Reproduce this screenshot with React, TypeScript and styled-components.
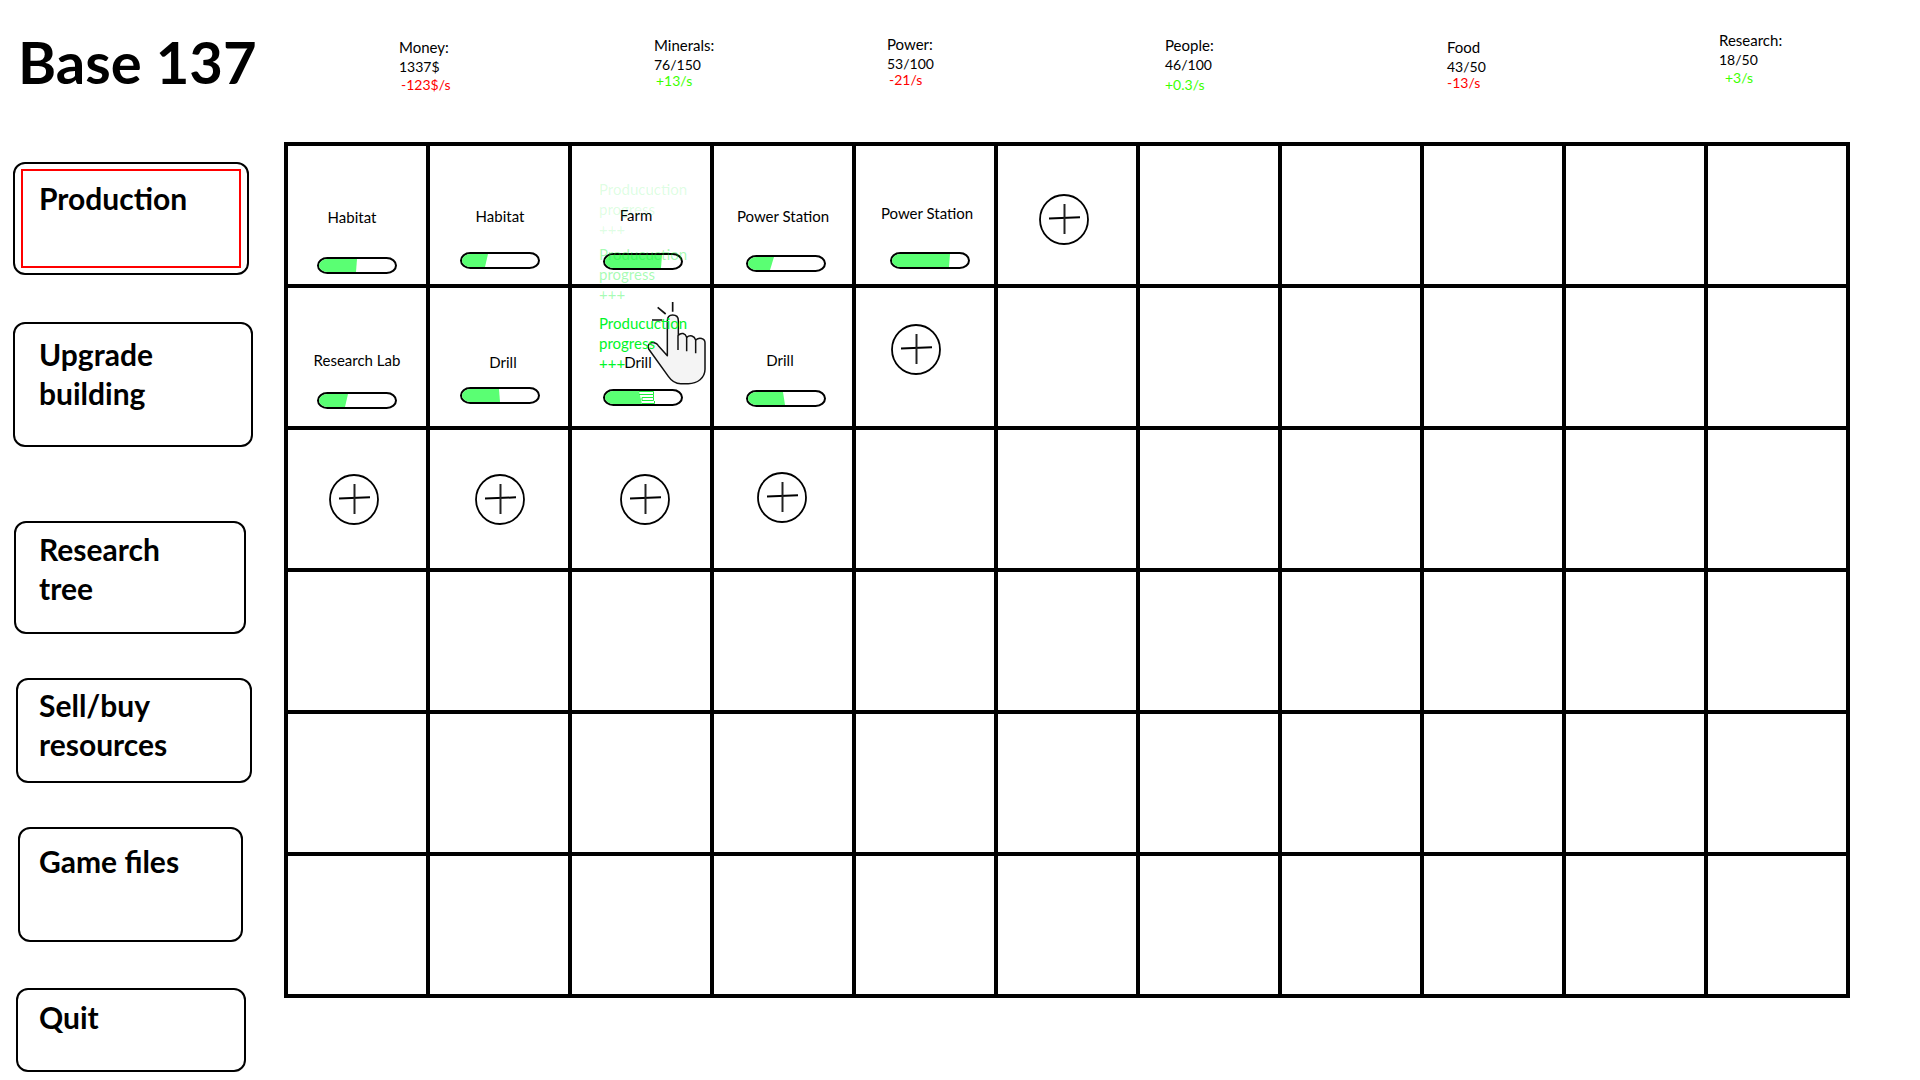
import React from "react";
import styled, { createGlobalStyle } from "styled-components";

const GlobalStyle = createGlobalStyle`
  *, *::before, *::after { box-sizing: border-box; }
  body {
    margin: 0;
    background: #fff;
    color: #000;
    font-family: Lato, "Open Sans", sans-serif;
    font-size: 15px;
    line-height: 20px;
  }
  button { font: inherit; color: inherit; cursor: pointer; }
`;

const Page = styled.div`
  display: flex;
  flex-direction: column;
`;

const Header = styled.header`
  display: grid;
  grid-template-columns: 399px 1fr;
  min-height: 142px;
`;

const Title = styled.h1`
  margin: 0;
  padding: 28px 0 0 18px;
  font-size: 58px;
  line-height: 67px;
  font-weight: 700;
`;

const Stats = styled.dl`
  display: grid;
  grid-template-columns: 255fr 233fr 278fr 282fr 272fr 201fr;
  margin: 0;
`;

const Stat = styled.div<{ $top: number }>`
  padding-top: ${(p) => p.$top}px;

  dt, dd { margin: 0; }
  dd { font-size: 14px; }
`;

const Rate = styled.dd<{ $up: boolean; $indent: number; $line: number }>`
  && { padding-left: ${(p) => p.$indent}px; }
  line-height: ${(p) => p.$line}px;
  color: ${(p) => (p.$up ? "#3cff00" : "#ff0000")};
`;

const Main = styled.div`
  display: grid;
  grid-template-columns: 284px 1fr;
  align-items: start;
  padding-right: 70px;
`;

const Menu = styled.nav`
  display: flex;
  flex-direction: column;
  align-items: flex-start;
  padding: 20px 0 8px 13px;
`;

interface MenuBox {
  $width: number;
  $height: number;
  $gap: number;
  $left: number;
  $top: number;
}

const MenuButton = styled.button<MenuBox>`
  position: relative;
  display: flex;
  align-items: flex-start;
  width: ${(p) => p.$width}px;
  min-height: ${(p) => p.$height}px;
  margin: ${(p) => p.$gap}px 0 0 ${(p) => p.$left}px;
  padding: ${(p) => p.$top}px 40px 0 ${(p) => 24 - p.$left}px;
  border: 2px solid #000;
  border-radius: 12px;
  background: #fff;
  font-size: 30px;
  line-height: 39px;
  font-weight: 700;
  text-align: left;

  &[aria-current="page"]::after {
    content: "";
    position: absolute;
    inset: 5px 6px;
    border: 2px solid #ff0000;
  }
`;

const Board = styled.main`
  display: grid;
  grid-template-columns: repeat(11, 1fr);
  border: solid #000;
  border-width: 4px 0 0 4px;
`;

const Cell = styled.div`
  position: relative;
  aspect-ratio: 1;
  border: solid #000;
  border-width: 0 4px 4px 0;
`;

const BuildingBox = styled.div<{ $top: number; $gap: number; $inset: number }>`
  display: flex;
  flex-direction: column;
  align-items: center;
  gap: ${(p) => p.$gap}px;
  padding: ${(p) => p.$top}px 0 0 ${(p) => p.$inset}px;
`;

const BuildingName = styled.span<{ $lean: number }>`
  padding: 0 ${(p) => Math.max(p.$lean, 0)}px 0 ${(p) => Math.max(-p.$lean, 0)}px;
  white-space: nowrap;
`;

const Bar = styled.div`
  position: relative;
  width: 80px;
  height: 17px;
  border: 2px solid #000;
  border-radius: 11px / 9px;
  overflow: hidden;
`;

const Fill = styled.div<{ $from: number; $to: number }>`
  height: 100%;
  background: #5aff73;
  clip-path: polygon(0 0, ${(p) => p.$from}px 0, ${(p) => p.$to}px 100%, 0 100%);
`;

const Sketch = styled.svg`
  position: absolute;
  left: 34px;
  top: 0;
`;

const Slot = styled.div<{ $pad: string }>`
  display: grid;
  place-items: center;
  height: 100%;
  padding: ${(p) => p.$pad};
`;

const AddButton = styled.button`
  display: block;
  padding: 0;
  border: 0;
  border-radius: 50%;
  background: none;

  svg { display: block; }
`;

const Floater = styled.div<{ $top: number; $alpha: number }>`
  position: absolute;
  z-index: 3;
  left: 27px;
  top: ${(p) => p.$top}px;
  width: 90px;
  color: rgba(0, 245, 40, ${(p) => p.$alpha});
  pointer-events: none;
`;

const Pointer = styled.svg`
  position: absolute;
  z-index: 2;
  left: 72px;
  top: 12px;
  pointer-events: none;
`;

const stats = [
  { label: "Money:", value: "1337$", rate: "-123$/s", top: 37, indent: 2, line: 16 },
  { label: "Minerals:", value: "76/150", rate: "+13/s", top: 35, indent: 2, line: 12 },
  { label: "Power:", value: "53/100", rate: "-21/s", top: 34, indent: 2, line: 12 },
  { label: "People:", value: "46/100", rate: "+0.3/s", top: 35, indent: 0, line: 20 },
  { label: "Food", value: "43/50", rate: "-13/s", top: 37, indent: 0, line: 12 },
  { label: "Research:", value: "18/50", rate: "+3/s", top: 30, indent: 6, line: 16 },
];

const menu = [
  { label: ["Production"], width: 236, height: 113, gap: 0, left: 0, top: 15 },
  { label: ["Upgrade", "building"], width: 240, height: 125, gap: 47, left: 0, top: 11 },
  { label: ["Research", "tree"], width: 232, height: 113, gap: 74, left: 1, top: 7 },
  { label: ["Sell/buy", "resources"], width: 236, height: 105, gap: 44, left: 3, top: 6 },
  { label: ["Game files"], width: 225, height: 115, gap: 44, left: 5, top: 13 },
  { label: ["Quit"], width: 230, height: 84, gap: 46, left: 3, top: 8 },
];

interface Building {
  name: string;
  top: number;
  gap: number;
  inset: number;
  lean: number;
  fill: [number, number];
  busy?: boolean;
}

const buildings: Record<string, Building> = {
  "0-0": { name: "Habitat", top: 61, gap: 30, inset: 0, lean: 10, fill: [38, 37] },
  "0-1": { name: "Habitat", top: 60, gap: 26, inset: 2, lean: 0, fill: [26, 23] },
  "0-2": { name: "Farm", top: 59, gap: 28, inset: 4, lean: 14, fill: [57, 56] },
  "0-3": { name: "Power Station", top: 60, gap: 29, inset: 6, lean: 6, fill: [26, 22] },
  "0-4": { name: "Power Station", top: 57, gap: 29, inset: 10, lean: 6, fill: [58, 57] },
  "1-0": { name: "Research Lab", top: 62, gap: 22, inset: 0, lean: 0, fill: [29, 26] },
  "1-1": { name: "Drill", top: 64, gap: 15, inset: 2, lean: -6, fill: [37, 38] },
  "1-2": { name: "Drill", top: 64, gap: 17, inset: 4, lean: 10, fill: [34, 37], busy: true },
  "1-3": { name: "Drill", top: 62, gap: 20, inset: 6, lean: 12, fill: [35, 37] },
};

const freeSlots: Record<string, string> = {
  "0-5": "8px 6px 0 0",
  "1-4": "0 18px 16px 0",
  "2-0": "0 6px 0 0",
  "2-1": "0 0 0 2px",
  "2-2": "0 0 0 8px",
  "2-3": "0 2px 4px 0",
};

const PlusIcon = () => (
  <svg width="50" height="51" viewBox="0 0 50 51" fill="none" stroke="#000">
    <ellipse cx="25" cy="25.5" rx="24" ry="24.5" strokeWidth="1.8" />
    <path d="M10 24.6L41 23.3" strokeWidth="2" />
    <path d="M25.5 10V40" strokeWidth="2" stroke="#222" />
  </svg>
);

const ClickHand = () => (
  <Pointer width="64" height="88" viewBox="0 0 192 264" aria-hidden="true">
    <g stroke="#111" strokeWidth="4.5" strokeLinejoin="round">
      <path
        fill="#f4f4f4"
        d="M70 167V63C70 51 76 45 86 45S103 51 103 62V106C112 96 124 100 128 112C138 103 151 107 155 120C165 111 183 114 183 128V208C183 234 160 251 133 251H110C94 251 82 242 73 229L14 147C8 134 22 122 35 130C38 131 41 134 43 137L70 167Z"
      />
      <path fill="none" d="M102 106V150M128 112V154M155 120V160" />
      <path fill="none" strokeWidth="5" d="M86 6V35M41 22L65 42M24 60H55" />
    </g>
  </Pointer>
);

const ProgressNote = ({ top, alpha }: { top: number; alpha: number }) => (
  <Floater $top={top} $alpha={alpha}>
    Producuction
    <br />
    progress
    <br />
    +++
  </Floater>
);

const BuildingCell = ({ b }: { b: Building }) => (
  <BuildingBox $top={b.top} $gap={b.gap} $inset={b.inset}>
    <BuildingName $lean={b.lean}>{b.name}</BuildingName>
    <Bar
      role="progressbar"
      aria-label={b.name}
      aria-valuemin={0}
      aria-valuemax={76}
      aria-valuenow={b.fill[0]}
    >
      <Fill $from={b.fill[0]} $to={b.fill[1]} />
      {b.busy && (
        <Sketch width="17" height="13" viewBox="0 0 17 13" fill="none" stroke="#1df03c">
          <path d="M0 .5H14.5V3.5M0 3.5H14.5V6.5H3M3 6.5V9.5H14.5M14.5 6.5V9.5M3 12.5H15.5V10" />
        </Sketch>
      )}
    </Bar>
  </BuildingBox>
);

const cells = Array.from({ length: 66 }, (_, i) => `${Math.floor(i / 11)}-${i % 11}`);

export default function App() {
  return (
    <Page>
      <GlobalStyle />
      <Header>
        <Title>Base 137</Title>
        <Stats>
          {stats.map((s) => (
            <Stat key={s.label} $top={s.top}>
              <dt>{s.label}</dt>
              <dd>{s.value}</dd>
              <Rate $up={s.rate[0] === "+"} $indent={s.indent} $line={s.line}>
                {s.rate}
              </Rate>
            </Stat>
          ))}
        </Stats>
      </Header>
      <Main>
        <Menu>
          {menu.map((m, i) => (
            <MenuButton
              key={m.label[0]}
              type="button"
              aria-current={i === 0 ? "page" : undefined}
              $width={m.width}
              $height={m.height}
              $gap={m.gap}
              $left={m.left}
              $top={m.top}
            >
              <span>
                {m.label[0]}
                {m.label[1] && <br />}
                {m.label[1]}
              </span>
            </MenuButton>
          ))}
        </Menu>
        <Board>
          {cells.map((id) => (
            <Cell key={id}>
              {buildings[id] && <BuildingCell b={buildings[id]} />}
              {freeSlots[id] && (
                <Slot $pad={freeSlots[id]}>
                  <AddButton type="button" aria-label="Add building">
                    <PlusIcon />
                  </AddButton>
                </Slot>
              )}
              {id === "0-2" && (
                <>
                  <ProgressNote top={33} alpha={0.14} />
                  <ProgressNote top={98} alpha={0.36} />
                </>
              )}
              {id === "1-2" && (
                <>
                  <ClickHand />
                  <ProgressNote top={25} alpha={1} />
                </>
              )}
            </Cell>
          ))}
        </Board>
      </Main>
    </Page>
  );
}
